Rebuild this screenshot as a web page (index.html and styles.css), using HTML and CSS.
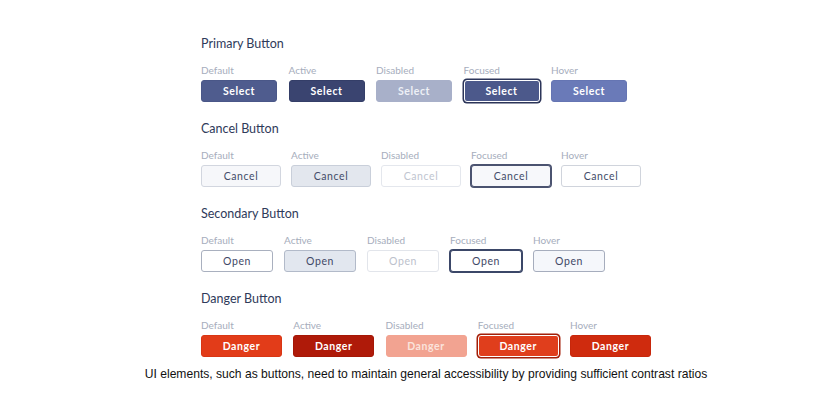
FILE: index.html
```html
<!DOCTYPE html>
<html lang="en">
<head>
<meta charset="utf-8">
<title>Button states</title>
<link rel="stylesheet" href="styles.css">
</head>
<body>
<main class="page">
  <section class="group group-primary">
    <h2 class="group-title">Primary Button</h2>
    <div class="states">
      <div class="state"><span class="state-label">Default</span><button class="btn primary">Select</button></div>
      <div class="state"><span class="state-label">Active</span><button class="btn primary is-active">Select</button></div>
      <div class="state"><span class="state-label">Disabled</span><button class="btn primary is-disabled">Select</button></div>
      <div class="state"><span class="state-label">Focused</span><button class="btn primary is-focused">Select</button></div>
      <div class="state"><span class="state-label">Hover</span><button class="btn primary is-hover">Select</button></div>
    </div>
  </section>

  <section class="group group-cancel">
    <h2 class="group-title">Cancel Button</h2>
    <div class="states">
      <div class="state"><span class="state-label">Default</span><button class="btn cancel">Cancel</button></div>
      <div class="state"><span class="state-label">Active</span><button class="btn cancel is-active">Cancel</button></div>
      <div class="state"><span class="state-label">Disabled</span><button class="btn cancel is-disabled">Cancel</button></div>
      <div class="state"><span class="state-label">Focused</span><button class="btn cancel is-focused">Cancel</button></div>
      <div class="state"><span class="state-label">Hover</span><button class="btn cancel is-hover">Cancel</button></div>
    </div>
  </section>

  <section class="group group-secondary">
    <h2 class="group-title">Secondary Button</h2>
    <div class="states">
      <div class="state"><span class="state-label">Default</span><button class="btn secondary">Open</button></div>
      <div class="state"><span class="state-label">Active</span><button class="btn secondary is-active">Open</button></div>
      <div class="state"><span class="state-label">Disabled</span><button class="btn secondary is-disabled">Open</button></div>
      <div class="state"><span class="state-label">Focused</span><button class="btn secondary is-focused">Open</button></div>
      <div class="state"><span class="state-label">Hover</span><button class="btn secondary is-hover">Open</button></div>
    </div>
  </section>

  <section class="group group-danger">
    <h2 class="group-title">Danger Button</h2>
    <div class="states">
      <div class="state"><span class="state-label">Default</span><button class="btn danger">Danger</button></div>
      <div class="state"><span class="state-label">Active</span><button class="btn danger is-active">Danger</button></div>
      <div class="state"><span class="state-label">Disabled</span><button class="btn danger is-disabled">Danger</button></div>
      <div class="state"><span class="state-label">Focused</span><button class="btn danger is-focused">Danger</button></div>
      <div class="state"><span class="state-label">Hover</span><button class="btn danger is-hover">Danger</button></div>
    </div>
  </section>

  <p class="caption">UI elements, such as buttons, need to maintain general accessibility by providing sufficient contrast ratios</p>
</main>
</body>
</html>
```

FILE: styles.css
```css
* { box-sizing: border-box; }

html, body {
  margin: 0;
  padding: 0;
  background: #ffffff;
}

body {
  font-family: Lato, "Open Sans", "Liberation Sans", sans-serif;
  width: 832px;
  height: 405px;
  overflow: hidden;
}

.page {
  padding-top: 36px;
}

.group {
  padding-left: 201px;
  margin-bottom: 19px;
}

.group-danger {
  margin-bottom: 0;
}

.group-title {
  margin: 0 0 12px 0;
  font-size: 12.5px;
  line-height: 16px;
  font-weight: 400;
  color: #2f3a5a;
}

.states {
  display: flex;
}

.group-primary .states { gap: 11.5px; }
.group-cancel .states { gap: 10px; }
.group-secondary .states { gap: 11px; }
.group-danger .states { gap: 11.25px; }

.state {
  display: flex;
  flex-direction: column;
}

.state-label {
  font-size: 10px;
  line-height: 12px;
  color: #a6adbc;
  margin-bottom: 4px;
}

.btn {
  height: 22px;
  padding: 0;
  margin: 0;
  border-radius: 3px;
  border: 1px solid transparent;
  font-family: Lato, "Open Sans", "Liberation Sans", sans-serif;
  font-size: 10.5px;
  letter-spacing: 0.6px;
  display: flex;
  align-items: center;
  justify-content: center;
  cursor: pointer;
}

/* Primary */
.primary {
  width: 76px;
  font-weight: 700;
  color: #ffffff;
  background: #4f5c8e;
  border-color: #4a5788;
}
.primary.is-active { background: #3a4470; border-color: #343e68; }
.primary.is-disabled { background: #a8b0c9; border-color: #a8b0c9; color: #eef0f6; }
.primary.is-focused {
  background: #4c598b;
  border-color: #ffffff;
  box-shadow: 0 0 0 1.5px #2c3559;
}
.primary.is-hover { background: #6a7ab8; border-color: #6575b3; }

/* Cancel */
.cancel {
  width: 80px;
  font-weight: 400;
  color: #434c69;
  background: #f6f7fa;
  border-color: #d2d6df;
}
.cancel.is-active { background: #e3e7ee; border-color: #c9cfda; }
.cancel.is-disabled { background: #ffffff; border-color: #e4e7ed; color: #c0c5d0; }
.cancel.is-focused {
  background: #f7f8fb;
  border-color: #4b5370;
  box-shadow: 0 0 0 1px #4b5370;
}
.cancel.is-hover { background: #ffffff; border-color: #d0d4dc; }

/* Secondary */
.secondary {
  width: 72px;
  font-weight: 400;
  color: #3f4866;
  background: #ffffff;
  border-color: #a9b0bf;
}
.secondary.is-active { background: #e2e7ef; border-color: #b2bac9; }
.secondary.is-disabled { background: #ffffff; border-color: #e2e5eb; color: #bcc1cc; }
.secondary.is-focused {
  background: #ffffff;
  border-color: #3b4768;
  box-shadow: 0 0 0 1px #3b4768;
}
.secondary.is-hover { background: #f5f7fb; border-color: #a6adbd; }

/* Danger */
.danger {
  width: 81px;
  font-weight: 700;
  color: #ffffff;
  background: #e23c19;
  border-color: #d93614;
}
.danger.is-active { background: #af1a09; border-color: #a51706; }
.danger.is-disabled { background: #f2a391; border-color: #f2a391; color: #fbe3dc; }
.danger.is-focused {
  background: #e03e1c;
  border-color: #ffffff;
  box-shadow: 0 0 0 1.5px #a31f08;
}
.danger.is-hover { background: #cf2b0e; border-color: #c7270b; }

.caption {
  margin: 10px 0 0 0;
  padding-left: 20px;
  text-align: center;
  font-family: "Liberation Sans", Arial, sans-serif;
  font-size: 12.1px;
  line-height: 14px;
  color: #111111;
}
```
